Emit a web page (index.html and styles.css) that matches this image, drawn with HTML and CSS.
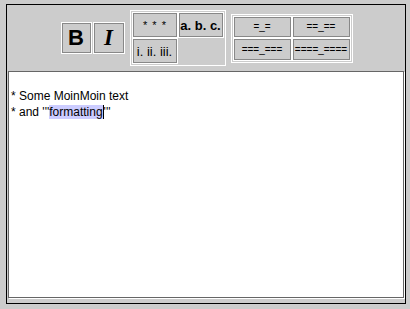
FILE: index.html
```html
<!DOCTYPE html>
<html>
<head>
<meta charset="utf-8">
<link rel="stylesheet" href="styles.css">
</head>
<body>
<div class="frame">
  <div class="toolbar">
    <div class="fmt">
      <div class="btn btn-b">B</div>
      <div class="btn btn-i">I</div>
    </div>
    <div class="group lists">
      <div class="btn stars">* * *</div>
      <div class="btn bold">a. b. c.</div>
      <div class="btn normal">i. ii. iii.</div>
      <div class="cell-empty"></div>
    </div>
    <div class="group heads">
      <div class="btn small">=_=</div>
      <div class="btn small">==_==</div>
      <div class="btn small">===_===</div>
      <div class="btn small">====_====</div>
    </div>
  </div>
  <div class="editor">
    <div class="line">* Some MoinMoin text</div>
    <div class="line">* and '''<span class="sel">formatting</span><span class="caret"></span>'''</div>
  </div>
</div>
</body>
</html>
```
FILE: styles.css
```css
html, body {
  margin: 0;
  padding: 0;
  background: #cccccc;
}
body {
  font-family: "Liberation Sans", Arial, sans-serif;
  width: 410px;
  height: 309px;
  overflow: hidden;
}
.frame {
  margin: 4px 0 0 6px;
  width: 398px;
  height: 298px;
  border: 1px solid #000;
  display: flex;
  flex-direction: column;
}
.toolbar {
  height: 66px;
  display: flex;
  align-items: center;
  justify-content: center;
  gap: 5px;
  padding-left: 1px;
}
.fmt {
  display: flex;
  gap: 1px;
}
.btn {
  box-sizing: border-box;
  border: 1px solid #fff;
  box-shadow: inset 0 0 0 1px #888;
  display: flex;
  align-items: center;
  justify-content: center;
  color: #000;
}
.btn-b {
  width: 31px;
  height: 32px;
  font-weight: bold;
  font-size: 22px;
  font-family: "Liberation Sans", Arial, sans-serif;
}
.btn-i {
  width: 32px;
  height: 32px;
  font-weight: bold;
  font-style: italic;
  font-size: 23px;
  font-family: "Liberation Serif", "Times New Roman", serif;
}
.group {
  border: 1px solid #fff;
  padding: 1px;
  display: grid;
}
.lists {
  grid-template-columns: 46px 46px;
  grid-template-rows: 26px 26px;
}
.heads {
  grid-template-columns: 59px 59px;
  grid-template-rows: 22px 23px;
}
.small {
  font-size: 10px;
}
.stars {
  font-size: 11px;
  letter-spacing: 1px;
  padding-left: 1px;
}
.bold {
  font-weight: bold;
  font-size: 13px;
}
.normal {
  font-size: 13px;
}
.editor {
  margin-left: 1px;
  width: 396px;
  height: 227px;
  box-sizing: border-box;
  border: 1px solid #666;
  box-shadow: 1px 1px 0 #fff;
  background: #fff;
  padding: 16px 0 0 2px;
  font-size: 12px;
  line-height: 16px;
  color: #000;
}
.sel {
  background: #ccccff;
}
.caret {
  display: inline-block;
  width: 1px;
  height: 14px;
  background: #000;
  vertical-align: -3px;
}
```
